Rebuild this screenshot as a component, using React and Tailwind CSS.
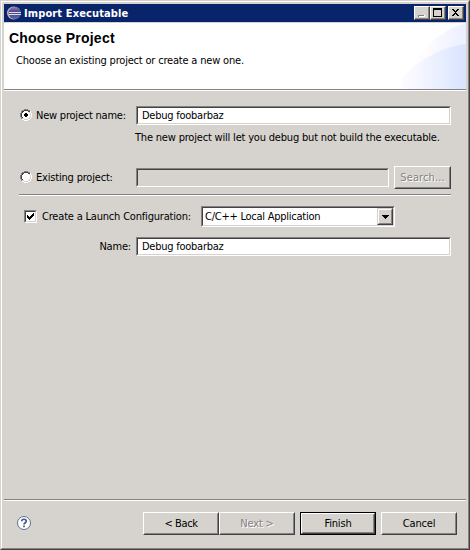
const FIELD =
  "box-border border border-t-[#848284] border-l-[#848284] border-r-white border-b-white";
const FIELD_INNER =
  "h-full border border-t-[#424142] border-l-[#424142] border-r-[#d6d3ce] border-b-[#d6d3ce] pl-1 flex items-center whitespace-nowrap tracking-[-0.25px]";
const RAISED =
  "border border-t-white border-l-white border-r-[#424142] border-b-[#424142]";
const RAISED_INNER =
  "h-full border border-t-[#d6d3ce] border-l-[#d6d3ce] border-r-[#848284] border-b-[#848284] flex items-center justify-center whitespace-nowrap";

function Field({ className = "", disabled, children }) {
  return (
    <div className={`${FIELD} ${className}`}>
      <div className={`${FIELD_INNER} ${disabled ? "bg-[#d6d3ce]" : "bg-white"}`}>{children}</div>
    </div>
  );
}

function Button({ className = "", disabled, primary, children }) {
  const face = (
    <div className={`${RAISED} h-full w-full`}>
      <div className={`${RAISED_INNER} ${disabled ? "text-[#848284] [text-shadow:1px_1px_0_white]" : ""}`}>
        <span>{children}</span>
      </div>
    </div>
  );
  return (
    <button className={`block h-[23px] shrink-0 ${primary ? "border border-black" : ""} ${className}`}>{face}</button>
  );
}

function TitleButton({ children, className = "" }) {
  return (
    <div className={`h-[14px] w-4 bg-[#d6d3ce] ${RAISED} ${className}`}>
      <div className="h-full border-r border-b border-[#848284]">
        <svg width="13" height="11" viewBox="0 0 13 11" shapeRendering="crispEdges" className="block">
          {children}
        </svg>
      </div>
    </div>
  );
}

function Radio({ checked }) {
  return (
    <svg width="12" height="12" viewBox="0 0 12 12" shapeRendering="crispEdges" className="-mt-px block shrink-0">
      <path d="M4 1h4v1h2v2h1v4h-1v2H8v1H4v-1H2V8H1V4h1V2h2z" fill="#fff" />
      <path d="M4 0h4v1H4zM2 1h2v1H2zM8 1h2v1H8zM1 2h1v2H1zM0 4h1v4H0zM1 8h1v2H1z" fill="#848284" />
      <path d="M4 1h4v1H4zM2 2h2v1H2zM8 2h2v1H8zM2 3h1v1H2zM1 4h1v4H1zM2 8h1v1H2z" fill="#424142" />
      <path d="M10 2h1v2h-1zM11 4h1v4h-1zM10 8h1v2h-1zM8 10h2v1H8zM2 10h2v1H2zM4 11h4v1H4z" fill="#fff" />
      <path d="M9 3h1v1H9zM10 4h1v4h-1zM9 8h1v1H9zM8 9h2v1H8zM2 9h2v1H2zM4 10h4v1H4z" fill="#d6d3ce" />
      {checked && <path d="M5 4h2v1h1v2H7v1H5V7H4V5h1z" fill="#000" />}
    </svg>
  );
}

function EclipseIcon() {
  return (
    <svg width="16" height="16" viewBox="0 0 16 16" className="block shrink-0">
      <defs>
        <linearGradient id="orb" x1="0" y1="0" x2="0" y2="1">
          <stop offset="0" stopColor="#8c86b5" />
          <stop offset="0.45" stopColor="#4a3c7b" />
          <stop offset="1" stopColor="#636baa" />
        </linearGradient>
      </defs>
      <circle cx="7.5" cy="8" r="6.5" fill="#c9aebd" />
      <circle cx="8.8" cy="8" r="6.2" fill="url(#orb)" />
      <path d="M3 7.5h12M3 9.5h12" stroke="#d6e3f7" strokeWidth="1" />
    </svg>
  );
}

export default function App() {
  return (
    <div className="flex h-[550px] w-[470px] flex-col border border-t-[#d6d3ce] border-l-[#d6d3ce] border-r-[#424142] border-b-[#424142] bg-[#d6d3ce] font-['DejaVu_Sans_Condensed','DejaVu_Sans',sans-serif] text-[11px] leading-[13px] tracking-[-0.19px] text-black">
      <div className="flex flex-1 flex-col border border-t-white border-l-white border-r-[#848284] border-b-[#848284] p-0.5">
        <div className="flex h-[18px] items-center bg-[#08246b] pr-0.5 pl-0.5 text-white">
          <EclipseIcon />
          <span className="ml-0.5 flex-1 text-[11px] font-bold tracking-[0.12px] whitespace-nowrap">
            Import Executable
          </span>
          <TitleButton>
            <path d="M3 8h6v2H3z" fill="#848284" />
            <path d="M4 10h6v-2h-1v1H4z" fill="#fff" />
          </TitleButton>
          <TitleButton>
            <path d="M2 1h9v9H2zM3 3v6h7V3z" fill="#000" fillRule="evenodd" />
          </TitleButton>
          <TitleButton className="ml-0.5">
            <path d="M3 2h2v1h1v1h1V3h1V2h2v1H9v1H8v1H7v1h1v1h1v1h1v1H8V8H7V7H6v1H5v1H3V8h1V7h1V6h1V5H5V4H4V3H3z" fill="#000" />
          </TitleButton>
        </div>

        <div className="mt-px flex h-[66px] justify-between bg-white">
          <div className="pt-[7px] pl-[5px] whitespace-nowrap">
            <div className="font-['Liberation_Sans',Arial,sans-serif] text-[14px] leading-4 font-bold tracking-[0.22px]">
              Choose Project
            </div>
            <div className="mt-2 pl-[7px]">Choose an existing project or create a new one.</div>
          </div>
          <svg width="66" height="66" viewBox="0 0 66 66" className="block">
            <defs>
              <linearGradient id="outer" gradientUnits="userSpaceOnUse" x1="0" x2="66">
                <stop offset="0" stopColor="#ffffff" />
                <stop offset="0.4" stopColor="#fffbff" />
                <stop offset="0.6" stopColor="#f7f7ff" />
                <stop offset="1" stopColor="#ebefff" />
              </linearGradient>
              <linearGradient id="inner" gradientUnits="userSpaceOnUse" x1="0" x2="66">
                <stop offset="0" stopColor="#fffbff" />
                <stop offset="0.25" stopColor="#f7f7ff" />
                <stop offset="0.6" stopColor="#e9efff" />
                <stop offset="1" stopColor="#d9e3ff" />
              </linearGradient>
            </defs>
            <path d="M8 50C20 27 40 7 66 0V66H4V56z" fill="url(#outer)" />
            <path d="M2 55C18 38 40 24 66 21V66H2z" fill="url(#inner)" />
          </svg>
        </div>
        <div className="h-0.5 border-t border-b border-t-[#848284] border-b-white" />

        <div className="flex flex-1 flex-col pr-[15px] pl-[15px]">
          <div className="mt-[15px] flex h-[19px] items-center">
            <div className="flex w-[117px] items-center pl-px">
              <Radio checked />
              <span className="ml-1 tracking-[-0.22px] whitespace-nowrap">New project name:</span>
            </div>
            <Field className="h-[19px] w-[315px]">Debug foobarbaz</Field>
          </div>
          <div className="mt-1.5 pl-[116px] whitespace-nowrap">
            The new project will let you debug but not build the executable.
          </div>
          <div className="mt-[22px] flex h-[23px] items-center">
            <div className="flex w-[117px] items-center pl-px">
              <Radio />
              <span className="ml-1 whitespace-nowrap">Existing project:</span>
            </div>
            <Field className="h-[19px] w-[253px]" disabled />
            <Button className="ml-[5px] w-[57px] tracking-[0.1px]" disabled>
              Search...
            </Button>
          </div>
          <div className="mt-[5px] h-0.5 w-[432px] border-t border-b border-t-[#848284] border-b-white" />
          <div className="mt-2.5 flex h-[21px] items-center">
            <div className="flex w-[182px] items-center pl-[5px]">
              <div className={`-mt-px h-[13px] w-[13px] shrink-0 ${FIELD}`}>
                <div className="h-full border border-t-[#424142] border-l-[#424142] border-r-[#d6d3ce] border-b-[#d6d3ce] bg-white">
                  <svg width="9" height="9" viewBox="0 0 9 9" shapeRendering="crispEdges" className="block">
                    <path d="M1 3h1v1h1v1h1V4h1V3h1V2h1V1h1v3H7v1H6v1H5v1H4v1H3V7H2V6H1z" fill="#000" />
                  </svg>
                </div>
              </div>
              <span className="ml-[5px] whitespace-nowrap">Create a Launch Configuration:</span>
            </div>
            <div className={`h-[21px] w-[194px] ${FIELD}`}>
              <div className="flex h-full items-center border border-t-[#424142] border-l-[#424142] border-r-[#d6d3ce] border-b-[#d6d3ce] bg-white pl-0.5">
                <span className="flex-1 tracking-[-0.25px] whitespace-nowrap">C/C++ Local Application</span>
                <div className="h-[17px] w-4 border border-t-[#d6d3ce] border-l-[#d6d3ce] border-r-[#424142] border-b-[#424142] bg-[#d6d3ce]">
                  <div className="flex h-full items-center justify-center border border-t-white border-l-white border-r-[#848284] border-b-[#848284]">
                    <svg width="7" height="4" viewBox="0 0 7 4" shapeRendering="crispEdges" className="block">
                      <path d="M0 0h7v1H6v1H5v1H4v1H3V3H2V2H1V1H0z" fill="#000" />
                    </svg>
                  </div>
                </div>
              </div>
            </div>
          </div>
          <div className="mt-2.5 flex h-[19px] items-center">
            <div className="w-[117px] pr-[5px] text-right">Name:</div>
            <Field className="h-[19px] w-[315px]">Debug foobarbaz</Field>
          </div>
        </div>

        <div className="h-0.5 border-t border-b border-t-[#848284] border-b-white" />
        <div className="flex h-[45px] items-start pt-[11px] pr-[9px] pl-3">
          <svg width="16" height="16" viewBox="0 0 16 16" className="mt-[3px] block">
            <circle cx="8" cy="8" r="6.5" fill="#fff" stroke="#5a7194" strokeWidth="1" />
            <path d="M5.7 6.3C5.7 3.6 10.3 3.6 10.3 6.2 10.3 7.8 8 7.8 8 9.6M8 10.6v1.7" fill="none" stroke="#42598c" strokeWidth="1.7" />
          </svg>
          <div className="ml-auto flex">
            <Button className="w-[76px] tracking-[-0.4px]">&lt; Back</Button>
            <Button className="w-[76px]" disabled>
              Next &gt;
            </Button>
            <Button className="ml-[5px] w-[76px]" primary>
              Finish
            </Button>
            <Button className="ml-[5px] w-[76px]">Cancel</Button>
          </div>
        </div>
      </div>
    </div>
  );
}
